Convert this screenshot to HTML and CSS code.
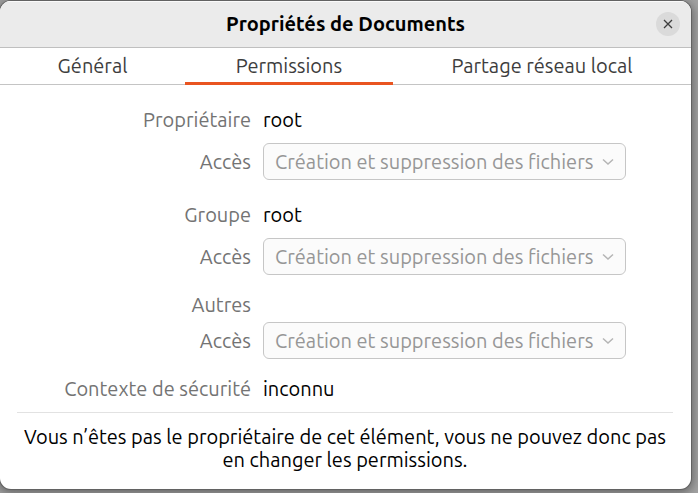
FILE: index.html
```html
<!DOCTYPE html>
<html lang="fr" dir="ltr">
	<head>
		<meta charset="utf-8">
		<title>Propriétés de Documents</title>
		<link rel="stylesheet" href="styles.css">
	</head>
	<body>
		<div class="window">
			<header class="titlebar">
				<h1>Propriétés de Documents</h1>
				<button class="close" type="button" aria-label="Fermer">
					<svg width="10" height="10" viewBox="0 0 10 10"><path d="M1 1 L9 9 M9 1 L1 9"/></svg>
				</button>
			</header>
			<div class="tabs" role="tablist">
				<button type="button" role="tab" aria-selected="false">Général</button>
				<button type="button" role="tab" aria-selected="true" class="active">Permissions</button>
				<button type="button" role="tab" aria-selected="false">Partage réseau local</button>
			</div>
			<main>
				<div class="group">
					<span class="label">Propriétaire</span>
					<span>root</span>
					<label class="label" for="owner">Accès</label>
					<div class="combo">
						<select id="owner" disabled><option>Création et suppression des fichiers</option></select>
						<svg width="12" height="8" viewBox="0 0 12 8"><path d="M1 1.5 L6 6 L11 1.5"/></svg>
					</div>
				</div>
				<div class="group">
					<span class="label">Groupe</span>
					<span>root</span>
					<label class="label" for="group">Accès</label>
					<div class="combo">
						<select id="group" disabled><option>Création et suppression des fichiers</option></select>
						<svg width="12" height="8" viewBox="0 0 12 8"><path d="M1 1.5 L6 6 L11 1.5"/></svg>
					</div>
				</div>
				<div class="group tight">
					<span class="label">Autres</span>
					<span></span>
					<label class="label" for="others">Accès</label>
					<div class="combo">
						<select id="others" disabled><option>Création et suppression des fichiers</option></select>
						<svg width="12" height="8" viewBox="0 0 12 8"><path d="M1 1.5 L6 6 L11 1.5"/></svg>
					</div>
				</div>
				<div class="group tight">
					<span class="label">Contexte de sécurité</span>
					<span>inconnu</span>
				</div>
				<p class="note">Vous n’êtes pas le propriétaire de cet élément, vous ne pouvez donc pas en changer les permissions.</p>
			</main>
		</div>
	</body>
</html>
```
FILE: styles.css
```css
* {
	box-sizing: border-box;
}

body {
	margin: 0;
	padding: 1px 7px 4px 0;
	background: #a2a2a2;
	color: #000;
	font-family: Ubuntu, "Open Sans", sans-serif;
	font-size: 20px;
	line-height: 22px;
}

button, select {
	font: inherit;
}

svg {
	fill: none;
	stroke: currentColor;
}

.window {
	overflow: hidden;
	background: #fff;
	border-radius: 11px;
	box-shadow: 0 0 0 1px #626262, 0 2px 10px 2px #666;
}

.titlebar {
	display: grid;
	grid-template-columns: 24px 1fr 24px;
	align-items: center;
	height: 47px;
	padding: 0 11px;
	background: #ebebeb;
	border-bottom: 1px solid #bfbfbf;
	box-shadow: inset 0 1px #fafafa;
}

.titlebar h1 {
	grid-column: 2;
	margin: 0;
	font-size: 20px;
	text-align: center;
}

.close {
	display: flex;
	align-items: center;
	justify-content: center;
	width: 24px;
	height: 24px;
	padding: 0;
	border: 0;
	border-radius: 50%;
	background: #dadada;
	color: #3d3d3d;
}

.close svg {
	stroke-width: 1.3;
}

.tabs {
	display: grid;
	grid-template-columns: 185fr 208fr 298fr;
	height: 37px;
	box-shadow: inset 0 -1px #c4c4c4;
}

.tabs button {
	padding: 2px 0 0;
	border: 0;
	border-bottom: 3px solid transparent;
	background: none;
	color: #3d3d3d;
}

.tabs .active {
	border-color: #e95420;
}

main {
	padding: 24px 18px 18px 17px;
}

.group {
	display: grid;
	grid-template-columns: 187px 363px;
	gap: 12px;
	align-items: center;
	justify-content: center;
	margin-bottom: 24px;
}

.group.tight {
	row-gap: 6px;
	margin-top: -5px;
}

.group > * {
	min-height: 22px;
}

.label {
	color: #737373;
	text-align: right;
	white-space: nowrap;
}

.combo {
	position: relative;
}

.combo select {
	display: block;
	width: 100%;
	height: 37px;
	padding: 0 20px 0 11px;
	appearance: none;
	border: 1px solid #c6c6c6;
	border-radius: 6px;
	background: #fbfbfb;
	color: #969696;
	opacity: 1;
}

.combo svg {
	position: absolute;
	top: 15px;
	right: 12px;
	color: #b5b5b5;
	stroke-width: 1.5;
}

.note {
	margin: -12px 0 0;
	padding-top: 12px;
	border-top: 1px solid #e2e2e2;
	line-height: 23px;
	text-align: center;
}
```
